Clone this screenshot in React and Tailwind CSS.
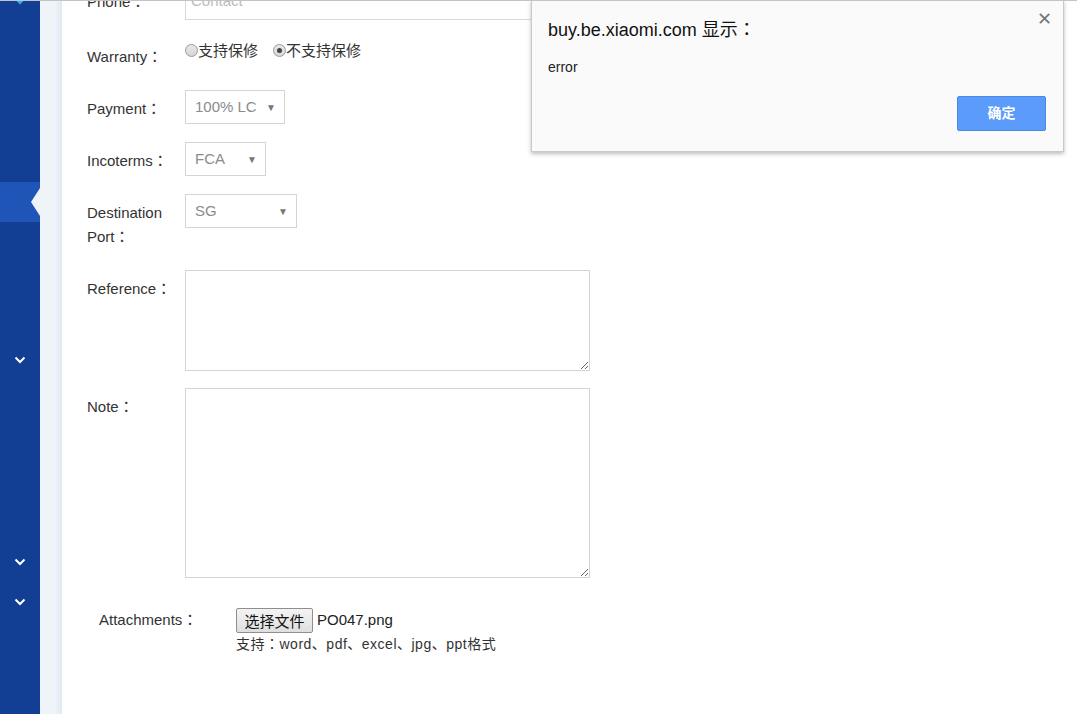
import React from "react";

const font = { fontFamily: '"Liberation Sans", Arial, "Noto Sans CJK SC", sans-serif' };
const cjkColon = { fontFamily: '"Noto Sans CJK JP", sans-serif' };

function Colon() {
  return <span className="leading-none" style={cjkColon}>：</span>;
}

function Chevron({ className = "" }) {
  return (
    <svg width="12" height="8" viewBox="0 0 12 8" className={className}>
      <path d="M1.5 1.5 L6 6 L10.5 1.5" fill="none" stroke="currentColor" strokeWidth="2" />
    </svg>
  );
}

function Radio({ checked }) {
  return (
    <span className="relative inline-block w-[13px] h-[13px] rounded-full border border-[#9a9a9a] bg-[linear-gradient(#e8e8e8,#d6d6d6)]">
      {checked && <span className="absolute left-[3px] top-[3px] w-[5px] h-[5px] rounded-full bg-[#444]" />}
    </span>
  );
}

function Select({ value, width }) {
  return (
    <div className={`${width} h-[34px] border border-[#d4d4d4] flex items-center justify-between pl-[9px] pr-[8px] text-[15px] text-[#8c8c8c]`}>
      <span>{value}</span>
      <span className="text-[10px] text-[#777]">▼</span>
    </div>
  );
}

function Label({ children, className = "" }) {
  return (
    <div className={`w-[98px] shrink-0 pt-[7px] leading-[24px] text-[15px] text-[#333] ${className}`}>
      {children}
      <Colon />
    </div>
  );
}

export default function App() {
  return (
    <div className="relative h-[714px] w-[1077px] overflow-hidden border-t border-[#c4c4c4] bg-white flex" style={font}>
      {/* sidebar */}
      <aside className="w-[40px] shrink-0 bg-[#123f94] flex flex-col items-center">
        <Chevron className="mt-[-4px] text-[#2fb2ef]" />
        <div className="mt-[177px] h-[40px] w-full bg-[#1f55b6] relative">
          <span className="absolute right-0 top-[6px] w-0 h-0 border-y-[14px] border-y-transparent border-r-[9px] border-r-[#eef3f8]" />
        </div>
        <Chevron className="mt-[134px] text-white" />
        <Chevron className="mt-[194px] text-white" />
        <Chevron className="mt-[32px] text-white" />
      </aside>
      <div className="w-[22px] shrink-0 bg-[linear-gradient(to_right,#eff4f9_65%,#e1e9f2)]" />

      {/* main form */}
      <main className="flex-1 pl-[25px]">
        <div className="mt-[-15px] flex mb-[18px]">
          <Label className="pt-0 mt-[-3px]">Phone</Label>
          <div className="w-[420px] h-[34px] border border-[#d8d8d8] flex items-center pl-[5px] pb-[3px] text-[15px] text-[#bbb]">Contact</div>
        </div>

        <div className="flex mb-[18px] h-[34px]">
          <Label>Warranty</Label>
          <div className="flex items-center h-[24px] text-[15px] text-[#333]" style={{ fontFamily: '"Noto Sans CJK SC", sans-serif' }}>
            <Radio />
            <span className="leading-[24px]">支持保修</span>
            <span className="ml-[15px]" />
            <Radio checked />
            <span className="leading-[24px]">不支持保修</span>
          </div>
        </div>

        <div className="flex mb-[18px]">
          <Label>Payment</Label>
          <Select value="100% LC" width="w-[100px]" />
        </div>

        <div className="flex mb-[18px]">
          <Label>Incoterms</Label>
          <Select value="FCA" width="w-[81px]" />
        </div>

        <div className="flex mb-[21px]">
          <Label>Destination Port</Label>
          <Select value="SG" width="w-[112px]" />
        </div>

        <div className="flex mb-[17px]">
          <Label>Reference</Label>
          <textarea className="w-[405px] h-[101px] border border-[#d4d4d4] outline-none block" />
        </div>

        <div className="flex mb-[30px]">
          <Label>Note</Label>
          <textarea className="w-[405px] h-[190px] border border-[#d4d4d4] outline-none block" />
        </div>

        <div className="flex pl-[12px]">
          <div className="w-[137px] shrink-0 leading-[24px] text-[15px] text-[#333]">
            Attachments<Colon />
          </div>
          <div className="flex flex-col">
            <div className="flex items-center">
              <button className="h-[25px] w-[77px] border border-[#8f8f8f] rounded-[2px] bg-[linear-gradient(#f4f4f4,#dedede)] text-[15px] text-[#111] leading-none" style={{ fontFamily: '"Noto Sans CJK SC", sans-serif' }}>选择文件</button>
              <span className="ml-[4px] text-[15px] text-[#222]">PO047.png</span>
            </div>
            <div className="mt-[1px] text-[14px] text-[#333] leading-[20px] tracking-[0.5px]">
              支持<Colon />word、pdf、excel、jpg、ppt格式
            </div>
          </div>
        </div>
      </main>

      {/* alert dialog */}
      <div className="absolute left-[531px] top-[-1px] w-[533px] h-[152px] bg-[#fafafa] border border-[#c9c9c9] shadow-[0_2px_4px_rgba(0,0,0,0.25)] pl-[16px] pr-[17px]">
        <button className="absolute right-[11px] top-[9px] text-[#777] text-[18px] leading-none">✕</button>
        <div className="mt-[16px] text-[18px] text-[#111] leading-[26px]">
          buy.be.xiaomi.com 显示<Colon />
        </div>
        <div className="mt-[14px] text-[14px] text-[#222] leading-[20px]">error</div>
        <div className="flex justify-end mt-[19px]">
          <button className="w-[89px] h-[35px] bg-[#5b9bfa] border border-[#4b88e6] rounded-[2px] text-white text-[14px] font-bold">确定</button>
        </div>
      </div>
    </div>
  );
}
